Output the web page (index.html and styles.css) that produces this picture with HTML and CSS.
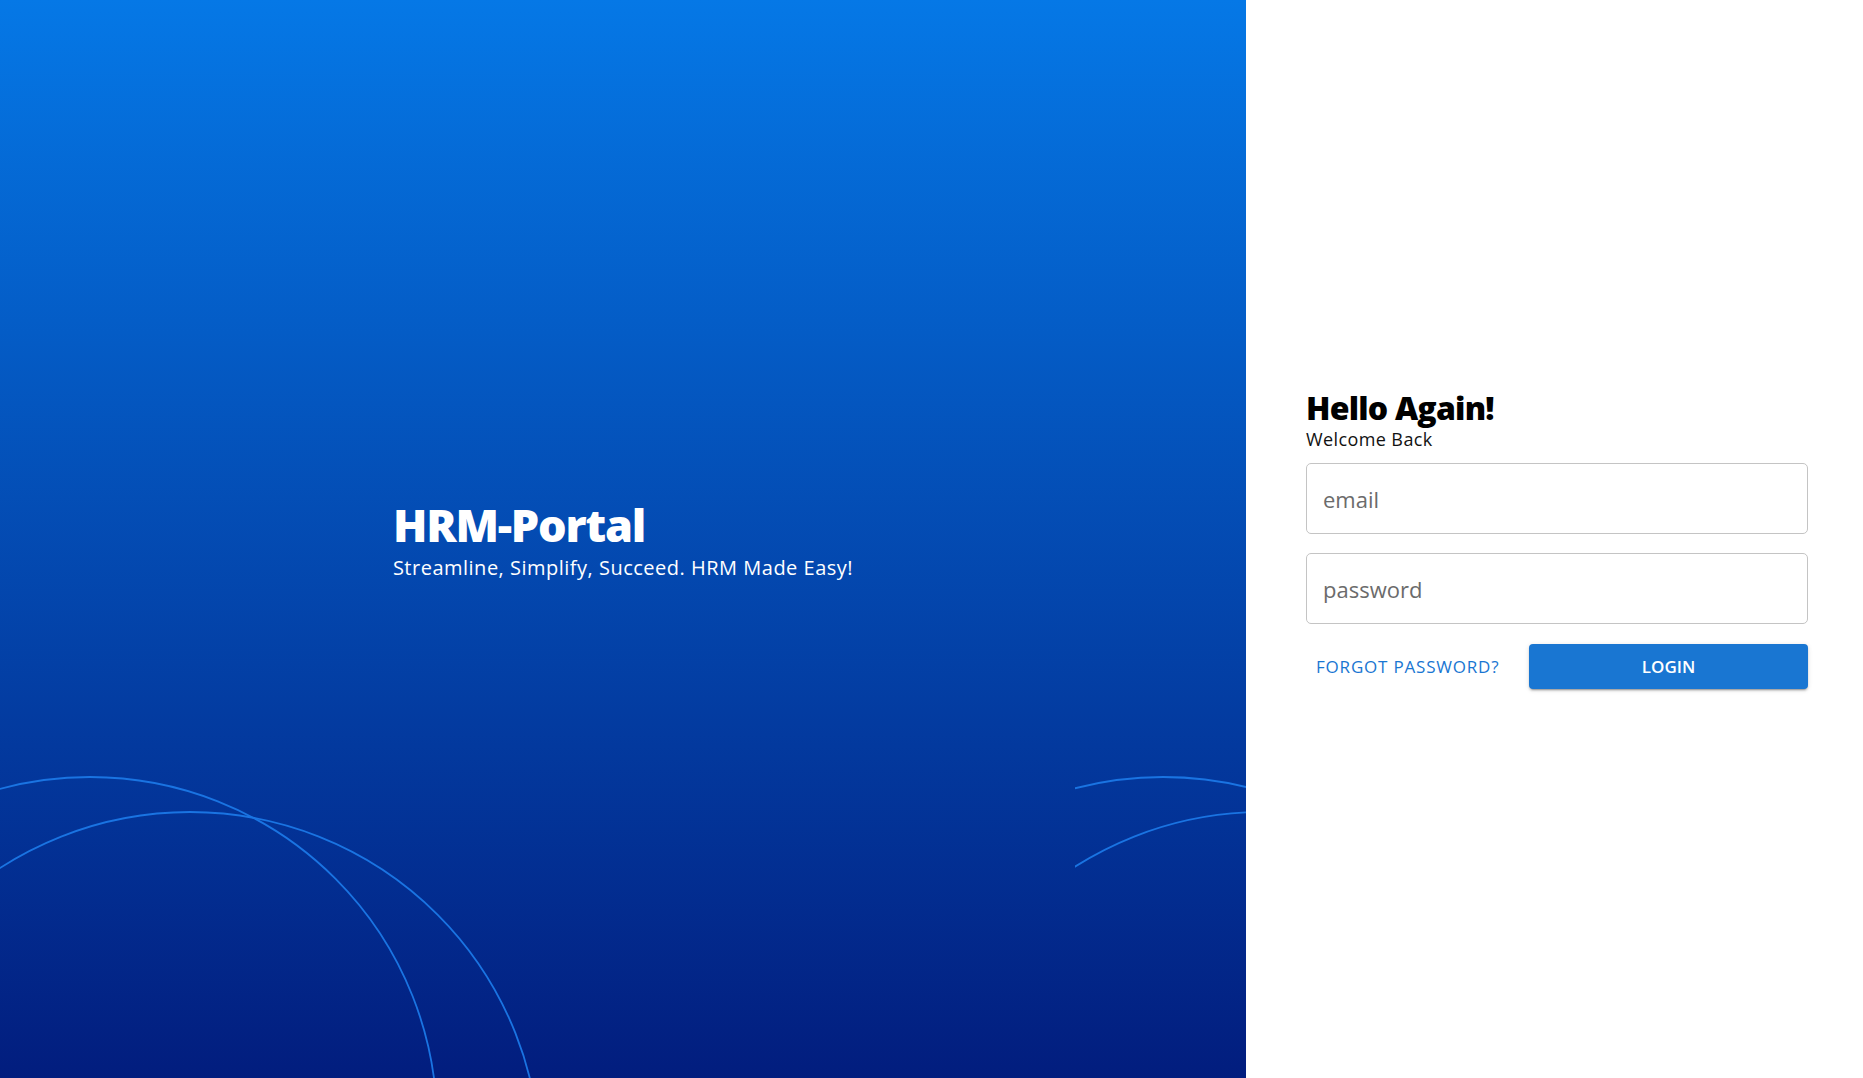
FILE: index.html
```html
<!DOCTYPE html>
<html lang="en">
<head>
<meta charset="utf-8">
<title>HRM-Portal</title>
<link rel="stylesheet" href="styles.css">
</head>
<body>
<main class="page">
  <section class="hero">
    <svg class="hero-arcs" width="1246" height="1078" viewBox="0 0 1246 1078" aria-hidden="true">
      <defs>
        <clipPath id="tile2"><rect x="1075" y="0" width="400" height="1078"/></clipPath>
      </defs>
      <g fill="none" stroke="#1a74e2" stroke-width="1.8">
        <circle cx="90" cy="1124" r="347"/>
        <circle cx="190" cy="1162" r="350"/>
        <g clip-path="url(#tile2)">
          <circle cx="1163" cy="1124" r="347"/>
          <circle cx="1263" cy="1162" r="350"/>
        </g>
      </g>
    </svg>
    <div class="hero-text">
      <h1 class="hero-title">HRM-Portal</h1>
      <p class="hero-sub">Streamline, Simplify, Succeed. HRM Made Easy!</p>
    </div>
  </section>
  <section class="panel">
    <form class="login">
      <h2 class="login-title">Hello Again!</h2>
      <p class="login-sub">Welcome Back</p>
      <input class="field field-email" type="text" placeholder="email">
      <input class="field field-pass" type="password" placeholder="password">
      <div class="actions">
        <button type="button" class="link-btn">FORGOT PASSWORD?</button>
        <button type="button" class="primary-btn">LOGIN</button>
      </div>
    </form>
  </section>
</main>
</body>
</html>
```

FILE: styles.css
```css
* { box-sizing: border-box; }
html, body { margin: 0; padding: 0; }
body {
  font-family: "Open Sans", "Liberation Sans", sans-serif;
  background: #fff;
}
.page {
  display: flex;
  width: 100%;
  height: 100vh;
}
.hero {
  flex: 0 0 1246px;
  position: relative;
  overflow: hidden;
  background: linear-gradient(to bottom, #0578e6 0%, #021d7e 100%);
  display: flex;
  align-items: center;
  justify-content: center;
}
.hero-arcs {
  position: absolute;
  left: 0;
  top: 0;
}
.hero-text {
  position: relative;
  color: #fff;
  padding-top: 2px;
}
.hero-title {
  margin: 0;
  font-size: 45px;
  line-height: 52px;
  font-weight: 800;
  letter-spacing: -1.2px;
}
.hero-sub {
  margin: 4px 0 0;
  font-size: 20px;
  line-height: 26px;
  font-weight: 400;
  letter-spacing: 0.5px;
}
.panel {
  flex: 1;
  display: flex;
  align-items: center;
  padding: 0 55px 0 60px;
}
.login {
  flex: 1;
  display: flex;
  flex-direction: column;
}
.login-title {
  margin: 0;
  font-size: 32px;
  line-height: 38px;
  font-weight: 800;
  letter-spacing: -0.8px;
  color: #000;
}
.login-sub {
  margin: 0 0 12px;
  font-size: 18px;
  line-height: 24px;
  letter-spacing: 0.4px;
  color: #111;
}
.field {
  height: 71px;
  border: 1px solid #c4c4c4;
  border-radius: 5px;
  padding: 0 16px;
  font-family: inherit;
  font-size: 22px;
  color: #222;
  outline: none;
}
.field::placeholder { color: #6b6b6b; }
.field-pass { margin-top: 19px; }
.actions {
  margin-top: 20px;
  display: flex;
  align-items: center;
  justify-content: space-between;
}
.link-btn {
  border: 0;
  background: none;
  color: #1976d2;
  font-family: inherit;
  font-size: 17px;
  font-weight: 500;
  letter-spacing: 0.8px;
  padding: 8px 10px;
  cursor: pointer;
}
.primary-btn {
  width: 279px;
  height: 45px;
  border: 0;
  border-radius: 4px;
  background: #1976d2;
  color: #fff;
  font-family: inherit;
  font-size: 17px;
  font-weight: 600;
  box-shadow: 0 3px 1px -2px rgba(0,0,0,0.2), 0 2px 2px 0 rgba(0,0,0,0.14), 0 1px 5px 0 rgba(0,0,0,0.12);
  cursor: pointer;
}
```
